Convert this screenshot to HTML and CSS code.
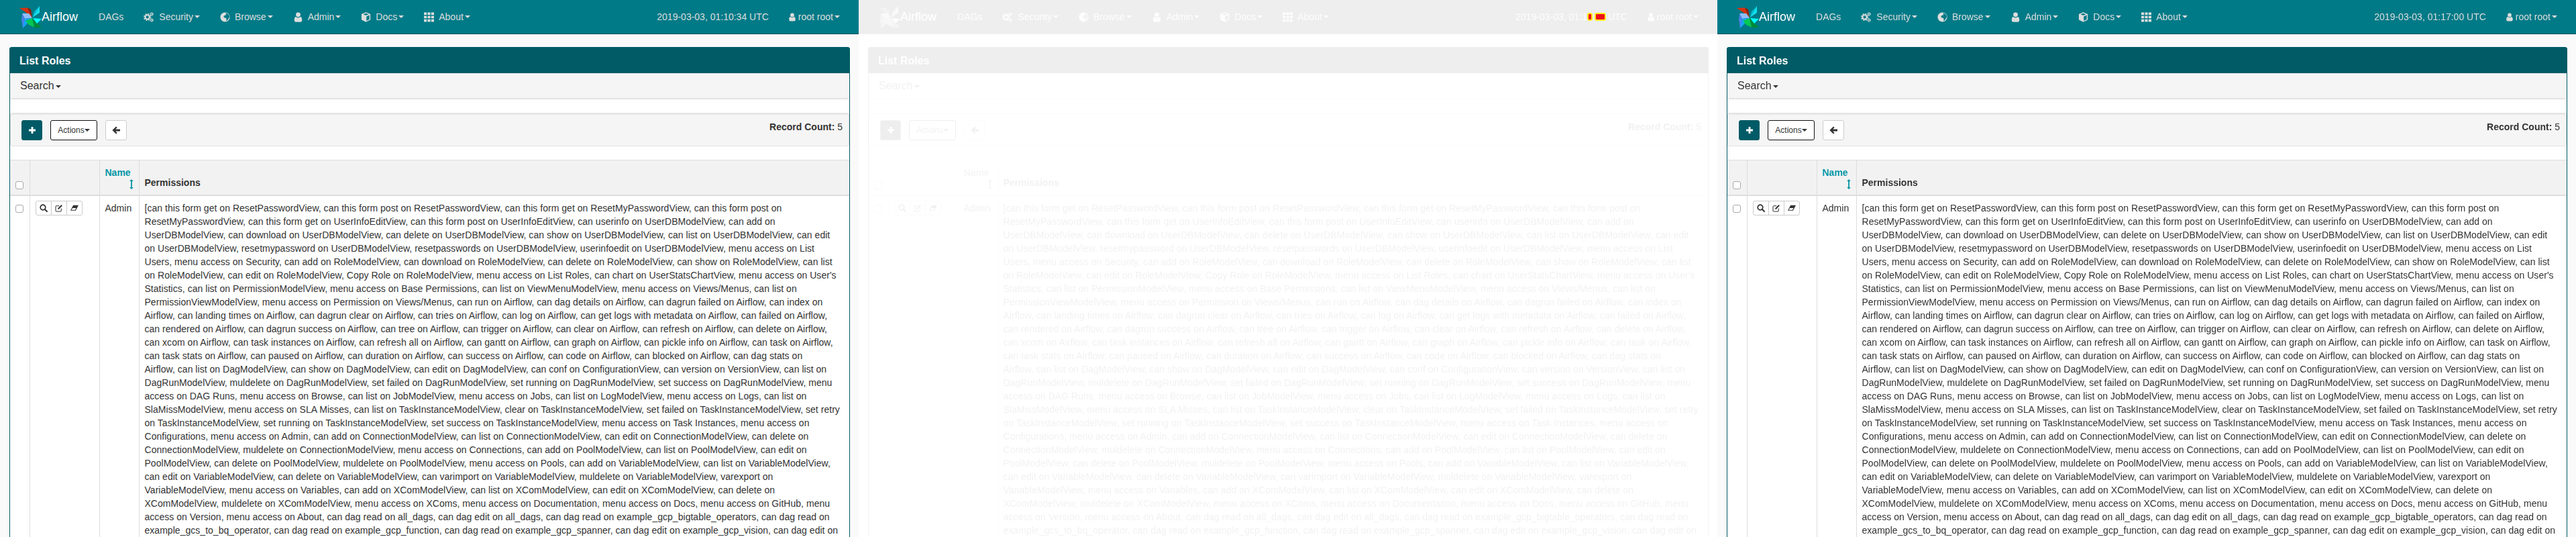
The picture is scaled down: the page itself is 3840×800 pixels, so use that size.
FILE: index.html
```html
<!DOCTYPE html>
<html lang="en">
<head>
    <meta charset="UTF-8">
    <title>List Roles - Airflow</title>
    <link rel="stylesheet" href="styles.css">
</head>
<body>

<!-- shared icons -->
<svg class="sprite" aria-hidden="true">
    <symbol id="i-logo" viewBox="0 0 33 33">
        <polygon points="0,3 12,2.5 19,17.5 9,9" fill="#d8300f"/>
        <polygon points="12,2.5 17,5 19,17.5" fill="#8f1d0a"/>
        <polygon points="30,0 30,10 19.5,17" fill="#11dfee"/>
        <polygon points="30,0 22,8 19.5,17" fill="#00bcd0"/>
        <polygon points="4,11 14,11 19,17.5 8,19" fill="#8fbdfa"/>
        <polygon points="4,11 8,19 19,18 5,33 3,20" fill="#4a7fe6"/>
        <polygon points="8,19 19,18 5,33" fill="#12a6f5"/>
        <polygon points="9,22 19,18 23,32 14,28" fill="#00c853"/>
        <polygon points="19,18 33,32 22,32" fill="#008a3b"/>
        <polygon points="20,18 33,19 26,26" fill="#0ff"/>
    </symbol>
    <symbol id="i-gears" viewBox="0 0 16 16">
        <circle cx="6" cy="8" r="3.4" fill="none" stroke="currentColor" stroke-width="2.2"/>
        <circle cx="6" cy="8" r="5.2" fill="none" stroke="currentColor" stroke-width="1.6" stroke-dasharray="2.2 1.9"/>
        <circle cx="13" cy="3.2" r="1.6" fill="none" stroke="currentColor" stroke-width="1.3"/>
        <circle cx="13" cy="3.2" r="2.7" fill="none" stroke="currentColor" stroke-width=".8" stroke-dasharray="1.2 1"/>
        <circle cx="13" cy="12.8" r="1.6" fill="none" stroke="currentColor" stroke-width="1.3"/>
        <circle cx="13" cy="12.8" r="2.7" fill="none" stroke="currentColor" stroke-width=".8" stroke-dasharray="1.2 1"/>
    </symbol>
    <symbol id="i-globe" viewBox="0 0 14 14">
        <circle cx="7" cy="7" r="6.6" fill="currentColor"/>
        <path d="M8 1.2 10.4 2c1.6 1 2.6 2.6 2.8 4.6l-.8 1.6-1.4 2.2-1.6 1.8-.8-.2.4-2.6-1.6-1.4-1.8-.4-.6-1.8 1.6-1.4 1.8-.2z" fill="#007a87"/>
    </symbol>
    <symbol id="i-user" viewBox="0 0 12 15">
        <circle cx="6" cy="3.8" r="3.4" fill="currentColor"/>
        <path d="M2.4 7c1 .9 2.2 1.4 3.6 1.4S8.600 7.900 9.600 7c1.500.4 2.100 2 2.100 4.800 0 1.800-.8 3-2.200 3H2.500c-1.400 0-2.200-1.200-2.200-3C.3 9 .9 7.400 2.400 7z" fill="currentColor"/>
    </symbol>
    <symbol id="i-cube" viewBox="0 0 14 15">
        <path d="M7 .3 13.600 3v8.600L7 14.700.4 11.600V3zM7 1.800 3 3.300l4 1.600 4-1.600zM7.700 13l4.500-2.200V4.600L7.700 6.400z" fill="currentColor" fill-rule="evenodd"/>
    </symbol>
    <symbol id="i-th" viewBox="0 0 13 12">
        <path d="M0 0h3.600v3.200H0zM4.700 0h3.600v3.200H4.700zM9.400 0H13v3.200H9.400zM0 4.400h3.600v3.200H0zM4.700 4.400h3.600v3.200H4.700zM9.400 4.400H13v3.200H9.400zM0 8.800h3.600V12H0zM4.700 8.800h3.600V12H4.700zM9.400 8.800H13V12H9.400z" fill="currentColor"/>
    </symbol>
    <symbol id="i-plus" viewBox="0 0 10 10">
        <path d="M3.600 0h2.800v3.600H10v2.800H6.400V10H3.600V6.400H0V3.600h3.600z" fill="currentColor"/>
    </symbol>
    <symbol id="i-back" viewBox="0 0 12 12">
        <path d="M6 .4 7.700 2.100 5.200 4.500H12v3H5.200l2.500 2.400L6 11.600.4 6z" fill="currentColor"/>
    </symbol>
    <symbol id="i-sort" viewBox="0 0 6 15">
        <path d="M3 0 5.800 3H3.900v9h1.900L3 15 .2 12h1.900V3H.2z" fill="currentColor"/>
    </symbol>
    <symbol id="i-search" viewBox="0 0 12 12">
        <circle cx="5" cy="5" r="3.800" fill="none" stroke="currentColor" stroke-width="1.700"/>
        <path d="M7.800 7.800 11 11" stroke="currentColor" stroke-width="2" stroke-linecap="round"/>
    </symbol>
    <symbol id="i-edit" viewBox="0 0 12 12">
        <path d="M9.300 6.500V10a1 1 0 0 1-1 1H2a1 1 0 0 1-1-1V3.700a1 1 0 0 1 1-1h4.300" fill="none" stroke="currentColor"/>
        <path d="M4.300 6.300 9.500 1.100l1.400 1.400L5.700 7.700H4.300z" fill="currentColor"/>
    </symbol>
    <symbol id="i-eraser" viewBox="0 0 13 11">
        <path d="M4.500 1H13L8.500 9.500H0zM1.700 8.600h5.900l1.600-3H3.300z" fill="currentColor" fill-rule="evenodd"/>
    </symbol>
</svg>

<div class="frames">

    <section class="frame">
        <nav class="navbar">
            <a class="brand"><svg class="logo"><use href="#i-logo"/></svg>Airflow</a>
            <a class="nav-item">DAGs</a>
            <a class="nav-item"><svg class="nav-icon"><use href="#i-gears"/></svg>Security<span class="caret"></span></a>
            <a class="nav-item"><svg class="nav-icon nav-icon-sm"><use href="#i-globe"/></svg>Browse<span class="caret"></span></a>
            <a class="nav-item"><svg class="nav-icon nav-icon-sm"><use href="#i-user"/></svg>Admin<span class="caret"></span></a>
            <a class="nav-item"><svg class="nav-icon nav-icon-sm"><use href="#i-cube"/></svg>Docs<span class="caret"></span></a>
            <a class="nav-item"><svg class="nav-icon nav-icon-sm"><use href="#i-th"/></svg>About<span class="caret"></span></a>
            <span class="nav-clock">2019-03-03, 01:10:34 UTC</span>
            <a class="nav-item nav-user"><svg class="user-icon"><use href="#i-user"/></svg>root root<span class="caret"></span></a>
        </nav>
        <main class="page">
            <div class="panel">
                <div class="panel-heading">List Roles</div>
                <div class="well well-search">Search<span class="caret"></span></div>
                <div class="well well-tools">
                    <div class="tools">
                        <a class="btn btn-add"><svg class="icon-plus"><use href="#i-plus"/></svg></a>
                        <a class="btn btn-actions">Actions<span class="caret"></span></a>
                        <a class="btn btn-back"><svg class="icon-back"><use href="#i-back"/></svg></a>
                    </div>
                    <div class="record-count"><b>Record Count:</b> 5</div>
                </div>
                <table class="roles">
                    <colgroup><col class="col-check"><col class="col-actions"><col class="col-name"><col></colgroup>
                    <thead>
                        <tr>
                            <th><input type="checkbox" class="check"></th>
                            <th></th>
                            <th><span class="sort-link">Name</span><svg class="icon-sort"><use href="#i-sort"/></svg></th>
                            <th>Permissions</th>
                        </tr>
                    </thead>
                    <tbody>
                        <tr>
                            <td><input type="checkbox" class="check"></td>
                            <td>
                                <div class="btn-group">
                                    <a class="btn-mini"><svg><use href="#i-search"/></svg></a>
                                    <a class="btn-mini"><svg><use href="#i-edit"/></svg></a>
                                    <a class="btn-mini"><svg><use href="#i-eraser"/></svg></a>
                                </div>
                            </td>
                            <td>Admin</td>
                            <td class="perms">[can this form get on ResetPasswordView, can this form post on ResetPasswordView, can this form get on ResetMyPasswordView, can this form post on
ResetMyPasswordView, can this form get on UserInfoEditView, can this form post on UserInfoEditView, can userinfo on UserDBModelView, can add on
UserDBModelView, can download on UserDBModelView, can delete on UserDBModelView, can show on UserDBModelView, can list on UserDBModelView, can edit
on UserDBModelView, resetmypassword on UserDBModelView, resetpasswords on UserDBModelView, userinfoedit on UserDBModelView, menu access on List
Users, menu access on Security, can add on RoleModelView, can download on RoleModelView, can delete on RoleModelView, can show on RoleModelView, can list
on RoleModelView, can edit on RoleModelView, Copy Role on RoleModelView, menu access on List Roles, can chart on UserStatsChartView, menu access on User's
Statistics, can list on PermissionModelView, menu access on Base Permissions, can list on ViewMenuModelView, menu access on Views/Menus, can list on
PermissionViewModelView, menu access on Permission on Views/Menus, can run on Airflow, can dag details on Airflow, can dagrun failed on Airflow, can index on
Airflow, can landing times on Airflow, can dagrun clear on Airflow, can tries on Airflow, can log on Airflow, can get logs with metadata on Airflow, can failed on Airflow,
can rendered on Airflow, can dagrun success on Airflow, can tree on Airflow, can trigger on Airflow, can clear on Airflow, can refresh on Airflow, can delete on Airflow,
can xcom on Airflow, can task instances on Airflow, can refresh all on Airflow, can gantt on Airflow, can graph on Airflow, can pickle info on Airflow, can task on Airflow,
can task stats on Airflow, can paused on Airflow, can duration on Airflow, can success on Airflow, can code on Airflow, can blocked on Airflow, can dag stats on
Airflow, can list on DagModelView, can show on DagModelView, can edit on DagModelView, can conf on ConfigurationView, can version on VersionView, can list on
DagRunModelView, muldelete on DagRunModelView, set failed on DagRunModelView, set running on DagRunModelView, set success on DagRunModelView, menu
access on DAG Runs, menu access on Browse, can list on JobModelView, menu access on Jobs, can list on LogModelView, menu access on Logs, can list on
SlaMissModelView, menu access on SLA Misses, can list on TaskInstanceModelView, clear on TaskInstanceModelView, set failed on TaskInstanceModelView, set retry
on TaskInstanceModelView, set running on TaskInstanceModelView, set success on TaskInstanceModelView, menu access on Task Instances, menu access on
Configurations, menu access on Admin, can add on ConnectionModelView, can list on ConnectionModelView, can edit on ConnectionModelView, can delete on
ConnectionModelView, muldelete on ConnectionModelView, menu access on Connections, can add on PoolModelView, can list on PoolModelView, can edit on
PoolModelView, can delete on PoolModelView, muldelete on PoolModelView, menu access on Pools, can add on VariableModelView, can list on VariableModelView,
can edit on VariableModelView, can delete on VariableModelView, can varimport on VariableModelView, muldelete on VariableModelView, varexport on
VariableModelView, menu access on Variables, can add on XComModelView, can list on XComModelView, can edit on XComModelView, can delete on
XComModelView, muldelete on XComModelView, menu access on XComs, menu access on Documentation, menu access on Docs, menu access on GitHub, menu
access on Version, menu access on About, can dag read on all_dags, can dag edit on all_dags, can dag read on example_gcp_bigtable_operators, can dag read on
example_gcs_to_bq_operator, can dag read on example_gcp_function, can dag read on example_gcp_spanner, can dag edit on example_gcp_vision, can dag edit on</td>
                        </tr>
                    </tbody>
                </table>
            </div>
        </main>
    </section>

    <!-- middle frame is caught halfway through a fade -->
    <section class="frame frame-fading">
        <div class="frame-inner">
            <nav class="navbar">
                <a class="brand"><svg class="logo"><use href="#i-logo"/></svg>Airflow</a>
                <a class="nav-item">DAGs</a>
                <a class="nav-item"><svg class="nav-icon"><use href="#i-gears"/></svg>Security<span class="caret"></span></a>
                <a class="nav-item"><svg class="nav-icon nav-icon-sm"><use href="#i-globe"/></svg>Browse<span class="caret"></span></a>
                <a class="nav-item"><svg class="nav-icon nav-icon-sm"><use href="#i-user"/></svg>Admin<span class="caret"></span></a>
                <a class="nav-item"><svg class="nav-icon nav-icon-sm"><use href="#i-cube"/></svg>Docs<span class="caret"></span></a>
                <a class="nav-item"><svg class="nav-icon nav-icon-sm"><use href="#i-th"/></svg>About<span class="caret"></span></a>
                <span class="nav-clock">2019-03-03, 01:13:47 UTC</span>
                <a class="nav-item nav-user"><svg class="user-icon"><use href="#i-user"/></svg>root root<span class="caret"></span></a>
            </nav>
            <main class="page">
                <div class="panel">
                    <div class="panel-heading">List Roles</div>
                    <div class="well well-search">Search<span class="caret"></span></div>
                    <div class="well well-tools">
                        <div class="tools">
                            <a class="btn btn-add"><svg class="icon-plus"><use href="#i-plus"/></svg></a>
                            <a class="btn btn-actions">Actions<span class="caret"></span></a>
                            <a class="btn btn-back"><svg class="icon-back"><use href="#i-back"/></svg></a>
                        </div>
                        <div class="record-count"><b>Record Count:</b> 5</div>
                    </div>
                    <table class="roles">
                        <colgroup><col class="col-check"><col class="col-actions"><col class="col-name"><col></colgroup>
                        <thead>
                            <tr>
                                <th><input type="checkbox" class="check"></th>
                                <th></th>
                                <th><span class="sort-link">Name</span><svg class="icon-sort"><use href="#i-sort"/></svg></th>
                                <th>Permissions</th>
                            </tr>
                        </thead>
                        <tbody>
                            <tr>
                                <td><input type="checkbox" class="check"></td>
                                <td>
                                    <div class="btn-group">
                                        <a class="btn-mini"><svg><use href="#i-search"/></svg></a>
                                        <a class="btn-mini"><svg><use href="#i-edit"/></svg></a>
                                        <a class="btn-mini"><svg><use href="#i-eraser"/></svg></a>
                                    </div>
                                </td>
                                <td>Admin</td>
                                <td class="perms">[can this form get on ResetPasswordView, can this form post on ResetPasswordView, can this form get on ResetMyPasswordView, can this form post on
ResetMyPasswordView, can this form get on UserInfoEditView, can this form post on UserInfoEditView, can userinfo on UserDBModelView, can add on
UserDBModelView, can download on UserDBModelView, can delete on UserDBModelView, can show on UserDBModelView, can list on UserDBModelView, can edit
on UserDBModelView, resetmypassword on UserDBModelView, resetpasswords on UserDBModelView, userinfoedit on UserDBModelView, menu access on List
Users, menu access on Security, can add on RoleModelView, can download on RoleModelView, can delete on RoleModelView, can show on RoleModelView, can list
on RoleModelView, can edit on RoleModelView, Copy Role on RoleModelView, menu access on List Roles, can chart on UserStatsChartView, menu access on User's
Statistics, can list on PermissionModelView, menu access on Base Permissions, can list on ViewMenuModelView, menu access on Views/Menus, can list on
PermissionViewModelView, menu access on Permission on Views/Menus, can run on Airflow, can dag details on Airflow, can dagrun failed on Airflow, can index on
Airflow, can landing times on Airflow, can dagrun clear on Airflow, can tries on Airflow, can log on Airflow, can get logs with metadata on Airflow, can failed on Airflow,
can rendered on Airflow, can dagrun success on Airflow, can tree on Airflow, can trigger on Airflow, can clear on Airflow, can refresh on Airflow, can delete on Airflow,
can xcom on Airflow, can task instances on Airflow, can refresh all on Airflow, can gantt on Airflow, can graph on Airflow, can pickle info on Airflow, can task on Airflow,
can task stats on Airflow, can paused on Airflow, can duration on Airflow, can success on Airflow, can code on Airflow, can blocked on Airflow, can dag stats on
Airflow, can list on DagModelView, can show on DagModelView, can edit on DagModelView, can conf on ConfigurationView, can version on VersionView, can list on
DagRunModelView, muldelete on DagRunModelView, set failed on DagRunModelView, set running on DagRunModelView, set success on DagRunModelView, menu
access on DAG Runs, menu access on Browse, can list on JobModelView, menu access on Jobs, can list on LogModelView, menu access on Logs, can list on
SlaMissModelView, menu access on SLA Misses, can list on TaskInstanceModelView, clear on TaskInstanceModelView, set failed on TaskInstanceModelView, set retry
on TaskInstanceModelView, set running on TaskInstanceModelView, set success on TaskInstanceModelView, menu access on Task Instances, menu access on
Configurations, menu access on Admin, can add on ConnectionModelView, can list on ConnectionModelView, can edit on ConnectionModelView, can delete on
ConnectionModelView, muldelete on ConnectionModelView, menu access on Connections, can add on PoolModelView, can list on PoolModelView, can edit on
PoolModelView, can delete on PoolModelView, muldelete on PoolModelView, menu access on Pools, can add on VariableModelView, can list on VariableModelView,
can edit on VariableModelView, can delete on VariableModelView, can varimport on VariableModelView, muldelete on VariableModelView, varexport on
VariableModelView, menu access on Variables, can add on XComModelView, can list on XComModelView, can edit on XComModelView, can delete on
XComModelView, muldelete on XComModelView, menu access on XComs, menu access on Documentation, menu access on Docs, menu access on GitHub, menu
access on Version, menu access on About, can dag read on all_dags, can dag edit on all_dags, can dag read on example_gcp_bigtable_operators, can dag read on
example_gcs_to_bq_operator, can dag read on example_gcp_function, can dag read on example_gcp_spanner, can dag edit on example_gcp_vision, can dag edit on</td>
                            </tr>
                        </tbody>
                    </table>
                </div>
            </main>
        </div>
        <div class="glitch glitch-a"></div>
        <div class="glitch glitch-b"></div>
    </section>

    <section class="frame">
        <nav class="navbar">
            <a class="brand"><svg class="logo"><use href="#i-logo"/></svg>Airflow</a>
            <a class="nav-item">DAGs</a>
            <a class="nav-item"><svg class="nav-icon"><use href="#i-gears"/></svg>Security<span class="caret"></span></a>
            <a class="nav-item"><svg class="nav-icon nav-icon-sm"><use href="#i-globe"/></svg>Browse<span class="caret"></span></a>
            <a class="nav-item"><svg class="nav-icon nav-icon-sm"><use href="#i-user"/></svg>Admin<span class="caret"></span></a>
            <a class="nav-item"><svg class="nav-icon nav-icon-sm"><use href="#i-cube"/></svg>Docs<span class="caret"></span></a>
            <a class="nav-item"><svg class="nav-icon nav-icon-sm"><use href="#i-th"/></svg>About<span class="caret"></span></a>
            <span class="nav-clock">2019-03-03, 01:17:00 UTC</span>
            <a class="nav-item nav-user"><svg class="user-icon"><use href="#i-user"/></svg>root root<span class="caret"></span></a>
        </nav>
        <main class="page">
            <div class="panel">
                <div class="panel-heading">List Roles</div>
                <div class="well well-search">Search<span class="caret"></span></div>
                <div class="well well-tools">
                    <div class="tools">
                        <a class="btn btn-add"><svg class="icon-plus"><use href="#i-plus"/></svg></a>
                        <a class="btn btn-actions">Actions<span class="caret"></span></a>
                        <a class="btn btn-back"><svg class="icon-back"><use href="#i-back"/></svg></a>
                    </div>
                    <div class="record-count"><b>Record Count:</b> 5</div>
                </div>
                <table class="roles">
                    <colgroup><col class="col-check"><col class="col-actions"><col class="col-name"><col></colgroup>
                    <thead>
                        <tr>
                            <th><input type="checkbox" class="check"></th>
                            <th></th>
                            <th><span class="sort-link">Name</span><svg class="icon-sort"><use href="#i-sort"/></svg></th>
                            <th>Permissions</th>
                        </tr>
                    </thead>
                    <tbody>
                        <tr>
                            <td><input type="checkbox" class="check"></td>
                            <td>
                                <div class="btn-group">
                                    <a class="btn-mini"><svg><use href="#i-search"/></svg></a>
                                    <a class="btn-mini"><svg><use href="#i-edit"/></svg></a>
                                    <a class="btn-mini"><svg><use href="#i-eraser"/></svg></a>
                                </div>
                            </td>
                            <td>Admin</td>
                            <td class="perms">[can this form get on ResetPasswordView, can this form post on ResetPasswordView, can this form get on ResetMyPasswordView, can this form post on
ResetMyPasswordView, can this form get on UserInfoEditView, can this form post on UserInfoEditView, can userinfo on UserDBModelView, can add on
UserDBModelView, can download on UserDBModelView, can delete on UserDBModelView, can show on UserDBModelView, can list on UserDBModelView, can edit
on UserDBModelView, resetmypassword on UserDBModelView, resetpasswords on UserDBModelView, userinfoedit on UserDBModelView, menu access on List
Users, menu access on Security, can add on RoleModelView, can download on RoleModelView, can delete on RoleModelView, can show on RoleModelView, can list
on RoleModelView, can edit on RoleModelView, Copy Role on RoleModelView, menu access on List Roles, can chart on UserStatsChartView, menu access on User's
Statistics, can list on PermissionModelView, menu access on Base Permissions, can list on ViewMenuModelView, menu access on Views/Menus, can list on
PermissionViewModelView, menu access on Permission on Views/Menus, can run on Airflow, can dag details on Airflow, can dagrun failed on Airflow, can index on
Airflow, can landing times on Airflow, can dagrun clear on Airflow, can tries on Airflow, can log on Airflow, can get logs with metadata on Airflow, can failed on Airflow,
can rendered on Airflow, can dagrun success on Airflow, can tree on Airflow, can trigger on Airflow, can clear on Airflow, can refresh on Airflow, can delete on Airflow,
can xcom on Airflow, can task instances on Airflow, can refresh all on Airflow, can gantt on Airflow, can graph on Airflow, can pickle info on Airflow, can task on Airflow,
can task stats on Airflow, can paused on Airflow, can duration on Airflow, can success on Airflow, can code on Airflow, can blocked on Airflow, can dag stats on
Airflow, can list on DagModelView, can show on DagModelView, can edit on DagModelView, can conf on ConfigurationView, can version on VersionView, can list on
DagRunModelView, muldelete on DagRunModelView, set failed on DagRunModelView, set running on DagRunModelView, set success on DagRunModelView, menu
access on DAG Runs, menu access on Browse, can list on JobModelView, menu access on Jobs, can list on LogModelView, menu access on Logs, can list on
SlaMissModelView, menu access on SLA Misses, can list on TaskInstanceModelView, clear on TaskInstanceModelView, set failed on TaskInstanceModelView, set retry
on TaskInstanceModelView, set running on TaskInstanceModelView, set success on TaskInstanceModelView, menu access on Task Instances, menu access on
Configurations, menu access on Admin, can add on ConnectionModelView, can list on ConnectionModelView, can edit on ConnectionModelView, can delete on
ConnectionModelView, muldelete on ConnectionModelView, menu access on Connections, can add on PoolModelView, can list on PoolModelView, can edit on
PoolModelView, can delete on PoolModelView, muldelete on PoolModelView, menu access on Pools, can add on VariableModelView, can list on VariableModelView,
can edit on VariableModelView, can delete on VariableModelView, can varimport on VariableModelView, muldelete on VariableModelView, varexport on
VariableModelView, menu access on Variables, can add on XComModelView, can list on XComModelView, can edit on XComModelView, can delete on
XComModelView, muldelete on XComModelView, menu access on XComs, menu access on Documentation, menu access on Docs, menu access on GitHub, menu
access on Version, menu access on About, can dag read on all_dags, can dag edit on all_dags, can dag read on example_gcp_bigtable_operators, can dag read on
example_gcs_to_bq_operator, can dag read on example_gcp_function, can dag read on example_gcp_spanner, can dag edit on example_gcp_vision, can dag edit on</td>
                        </tr>
                    </tbody>
                </table>
            </div>
        </main>
    </section>

</div>

</body>
</html>
```
FILE: styles.css
```css
html, body {
    height: 800px;
    margin: 0;
    overflow: hidden;
}

body {
    font-family: "Liberation Sans", Arial, sans-serif;
    font-size: 14px;
    line-height: 20px;
    color: #333;
    background-color: #fff;
}

.sprite {
    display: none;
}

.frames {
    display: grid;
    grid-template-columns: repeat(3, 1280px);
    height: 800px;
}

.frame {
    position: relative;
    height: 800px;
    overflow: hidden;
    background-color: #fafafa;
}

/* middle frame */
.frame-fading {
    background-color: #fff;
}

.frame-inner {
    height: 800px;
    opacity: 0.07;
    filter: grayscale(1);
    background-color: #fff;
}

.frame-fading .navbar {
    background-color: #0c0c0c;
}

.frame-fading .panel-heading,
.frame-fading .btn-add {
    background-color: #000;
}

.glitch {
    position: absolute;
    top: 19px;
    height: 12px;
    background-color: #f0101a;
    border: 2px solid #ffef1a;
    border-radius: 3px;
    box-sizing: border-box;
}

.glitch-a {
    left: 1086px;
    width: 8px;
}

.glitch-b {
    left: 1097px;
    width: 17px;
}

/* top bar */
.navbar {
    display: flex;
    align-items: center;
    height: 50px;
    padding: 0 13px 0 29px;
    background-color: #007a87;
    border-bottom: 1px solid #004e5a;
    color: #ddd;
}

.brand {
    display: flex;
    align-items: center;
    padding-right: 16px;
    font-size: 18px;
    color: #fff;
}

.logo {
    width: 33px;
    height: 33px;
}

.nav-item {
    display: flex;
    align-items: center;
    padding: 0 15px;
    white-space: nowrap;
}

.nav-icon {
    width: 15px;
    height: 15px;
    margin-right: 8px;
}

.nav-icon-sm {
    margin-right: 7px;
}

.nav-clock {
    margin-left: auto;
    padding-right: 15px;
    white-space: nowrap;
}

.user-icon {
    width: 10px;
    height: 15px;
    margin-right: 4px;
}

.caret {
    display: inline-block;
    width: 0;
    height: 0;
    margin-left: 2px;
    border-top: 4px solid currentColor;
    border-left: 4px solid transparent;
    border-right: 4px solid transparent;
}

/* panel */
.page {
    padding: 19px 13px 0 14px;
}

.panel {
    height: 800px;
    background-color: #fff;
    border: 1px solid #005b66;
    border-top: 0;
    border-radius: 4px 4px 0 0;
}

.panel-heading {
    height: 39px;
    margin: 0 -1px;
    padding-left: 15px;
    line-height: 41px;
    font-size: 16px;
    font-weight: bold;
    color: #fff;
    background-color: #005b66;
    border-radius: 4px 4px 0 0;
}

.well {
    background-color: #f5f5f5;
    border: 1px solid #e3e3e3;
    border-radius: 4px;
    box-sizing: border-box;
    box-shadow: inset 0 1px 1px rgba(0, 0, 0, 0.05);
}

.well-search {
    height: 39px;
    padding-left: 15px;
    line-height: 38px;
    font-size: 16px;
    border-width: 0 0 2px;
    border-radius: 0 0 4px 4px;
}

.well-search .caret {
    vertical-align: middle;
}

.well-tools {
    display: flex;
    justify-content: space-between;
    height: 50px;
    margin-top: 20px;
    padding: 9px 9px 0 16px;
    border-top-width: 2px;
}

.tools {
    display: flex;
    gap: 12px;
}

.btn {
    display: flex;
    align-items: center;
    justify-content: center;
    height: 30px;
    box-sizing: border-box;
    border: 1px solid #ccc;
    border-radius: 3px;
    background-color: #fff;
}

.btn-add {
    width: 31px;
    color: #fff;
    background-color: #005b66;
    border-color: #005b66;
}

.btn-actions {
    width: 70px;
    font-size: 12px;
    border-color: #111;
}

.btn-actions .caret {
    margin-left: 0;
}

.btn-back {
    width: 32px;
}

.icon-plus {
    width: 10px;
    height: 10px;
}

.icon-back {
    width: 12px;
    height: 12px;
}

.record-count {
    font-size: 14px;
}

/* table */
.roles {
    width: 100%;
    margin-top: 20px;
    table-layout: fixed;
    border-collapse: collapse;
}

.col-check {
    width: 29px;
}

.col-actions {
    width: 104px;
}

.col-name {
    width: 59px;
}

.roles th,
.roles td {
    padding: 8px;
    border: 1px solid #ddd;
    vertical-align: top;
    text-align: left;
}

.roles th {
    height: 35px;
    vertical-align: bottom;
    font-weight: bold;
    background-color: #f2f2f2;
    border-bottom-width: 2px;
}

.roles th:first-child,
.roles td:first-child {
    border-left: 0;
}

.roles th:last-child,
.roles td:last-child {
    border-right: 0;
}

.perms {
    white-space: pre-line;
    letter-spacing: 0.03px;
}

.sort-link {
    display: block;
    color: #0095a5;
}

.icon-sort {
    display: block;
    width: 6px;
    height: 15px;
    margin-left: auto;
    color: #0095a5;
}

.check {
    appearance: none;
    display: block;
    width: 12px;
    height: 12px;
    margin: 0;
    border: 1px solid #aaa;
    border-radius: 3px;
    background-color: #fff;
}

.roles td:first-child .check {
    margin-top: 5px;
}

.btn-group {
    display: flex;
    width: 70px;
    height: 22px;
    margin-top: -1px;
    box-sizing: border-box;
    border: 1px solid #ccc;
    border-radius: 3px;
    background-color: #fff;
}

.btn-mini {
    display: flex;
    flex: 1;
    align-items: center;
    justify-content: center;
    border-left: 1px solid #ccc;
}

.btn-mini:first-child {
    border-left: 0;
}

.btn-mini svg {
    width: 12px;
    height: 12px;
}
```
